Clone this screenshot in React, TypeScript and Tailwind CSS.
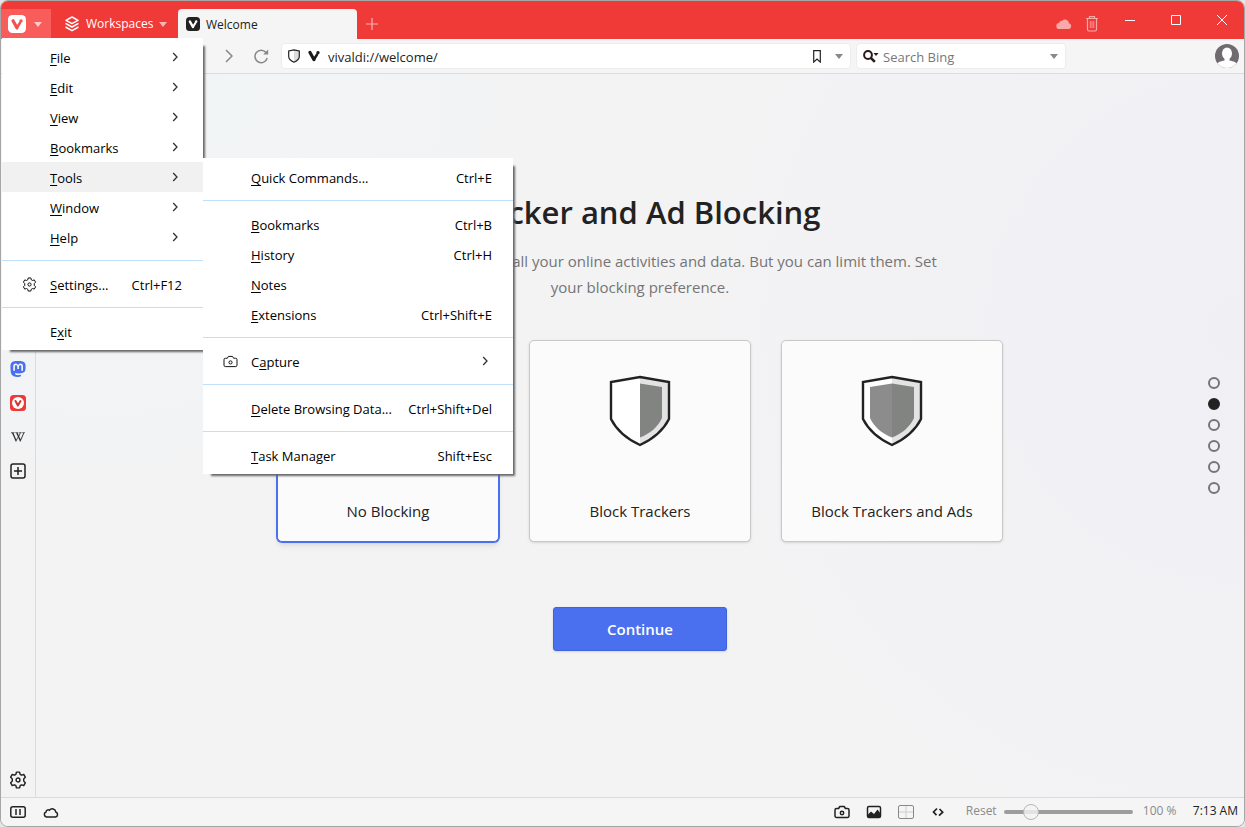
import { ReactNode } from "react";
import { SiMastodon } from "react-icons/si";
import { FaWikipediaW } from "react-icons/fa";

type Entry = {
  label: string;
  hot: number;
  shortcut?: string;
  submenu?: boolean;
  icon?: ReactNode;
  active?: boolean;
};

function Gear({ className }: { className: string }) {
  return (
    <svg viewBox="0 0 16 16" className={className} fill="none" stroke="currentColor" strokeLinejoin="round">
      <path d="M6.6 1h2.8l.5 2 1.2.7 2-.6 1.4 2.4-1.4 1.5v2l1.4 1.5-1.4 2.4-2-.6-1.2.7-.5 2H6.6l-.5-2-1.2-.7-2 .6-1.4-2.4L2.900 9V7L1.500 5.500l1.400-2.400 2 .600 1.200-.700z" />
      <circle cx="8" cy="8" r="1.700" />
    </svg>
  );
}

function Camera({ className }: { className: string }) {
  return (
    <svg viewBox="0 0 16 14" className={className} fill="none" stroke="currentColor" strokeLinejoin="round">
      <path d="M2.500 3.500H4.600L5.800 1.500h4.400l1.200 2h2.100a1.500 1.500 0 0 1 1.500 1.500v6a1.500 1.500 0 0 1-1.500 1.500h-11A1.500 1.500 0 0 1 1 11V5a1.500 1.500 0 0 1 1.500-1.500z" />
      <circle cx="8" cy="8" r="1.700" />
    </svg>
  );
}

function Caret({ className }: { className: string }) {
  return (
    <svg viewBox="0 0 8 5" className={`h-[5px] w-2 shrink-0 ${className}`} fill="currentColor">
      <path d="M0 0h8L4 5z" />
    </svg>
  );
}

function ChevronRight({ className }: { className: string }) {
  return (
    <svg viewBox="0 0 6 10" className={className} fill="none" stroke="currentColor" strokeWidth="1.300">
      <path d="M1.200 1L5 5 1.200 9" />
    </svg>
  );
}

function VShape() {
  return (
    <g fill="none" stroke="currentColor" strokeLinecap="round" strokeLinejoin="round">
      <path d="M2 2.500L5.900 9.500" strokeWidth="3.200" />
      <path d="M5.900 9.500L9 4.600" strokeWidth="2.600" />
      <circle cx="10" cy="2.600" r="1" strokeWidth="1.400" fill="currentColor" />
    </g>
  );
}

function VMark({ className }: { className: string }) {
  return (
    <svg viewBox="0 0 12 12" className={className}>
      <VShape />
    </svg>
  );
}

function VBadge({ className, tile }: { className: string; tile: string }) {
  return (
    <svg viewBox="0 0 18 18" className={className}>
      <rect width="18" height="18" rx="4.500" fill={tile} />
      <g transform="translate(3 3.300)">
        <VShape />
      </g>
    </svg>
  );
}

const toolsMenu: Entry[][] = [
  [{ label: "Quick Commands...", hot: 0, shortcut: "Ctrl+E" }],
  [
    { label: "Bookmarks", hot: 0, shortcut: "Ctrl+B" },
    { label: "History", hot: 0, shortcut: "Ctrl+H" },
    { label: "Notes", hot: 0 },
    { label: "Extensions", hot: 0, shortcut: "Ctrl+Shift+E" },
  ],
  [{ label: "Capture", hot: 1, submenu: true, icon: <Camera className="h-[13px] w-[15px]" /> }],
  [{ label: "Delete Browsing Data...", hot: 0, shortcut: "Ctrl+Shift+Del" }],
  [{ label: "Task Manager", hot: 0, shortcut: "Shift+Esc" }],
];

const mainMenu: Entry[][] = [
  [
    { label: "File", hot: 0, submenu: true },
    { label: "Edit", hot: 0, submenu: true },
    { label: "View", hot: 0, submenu: true },
    { label: "Bookmarks", hot: 0, submenu: true },
    { label: "Tools", hot: 0, submenu: true, active: true },
    { label: "Window", hot: 0, submenu: true },
    { label: "Help", hot: 0, submenu: true },
  ],
  [{ label: "Settings...", hot: 0, shortcut: "Ctrl+F12", icon: <Gear className="size-[15px]" /> }],
  [{ label: "Exit", hot: 1 }],
];

function Menu({ groups, className, name }: { groups: Entry[][]; className: string; name: string }) {
  return (
    <div
      role="menu"
      aria-label={name}
      className={`absolute bg-white py-1 text-black shadow-[5px_5px_2px_-3px_#666] ${className}`}
    >
      {groups.map((group, g) => (
        <div key={g} className={g > 0 ? "mt-2 border-t border-[#bfe0fa] pt-2" : ""}>
          {group.map((e) => (
            <button
              key={e.label}
              role="menuitem"
              className={`flex h-[30px] w-full items-center whitespace-nowrap text-[13px] font-medium ${e.active ? "bg-[#f1f1f1]" : ""}`}
            >
              <span className="w-12 shrink-0 pl-5">{e.icon}</span>
              <span className="pt-1">
                {e.label.slice(0, e.hot)}
                <span className="underline underline-offset-2">{e.label[e.hot]}</span>
                {e.label.slice(e.hot + 1)}
              </span>
              {e.shortcut && <span className="ml-auto pt-1 pr-[21px]">{e.shortcut}</span>}
              {e.submenu && <ChevronRight className="mr-[25px] ml-auto h-2.5 w-1.5 text-[#333]" />}
            </button>
          ))}
        </div>
      ))}
    </div>
  );
}

function TitleBar() {
  return (
    <header className="flex h-[38px] shrink-0 items-end bg-[#f03a38] text-white">
      <button aria-label="Vivaldi menu" className="flex h-[30px] w-[50px] items-center gap-2 bg-[#f85d5b] pl-[7px]">
        <VBadge className="size-[18px] text-[#f4504e]" tile="#fff" />
        <Caret className="text-[#fcc8c8]" />
      </button>
      <button className="flex h-[30px] w-[127px] items-center pl-3.5 text-xs font-medium">
        <svg viewBox="0 0 14 16" className="mr-[7px] h-4 w-3.5" fill="none" stroke="currentColor" strokeWidth="1.500" strokeLinejoin="round">
          <path d="M7 1l6 3.300-6 3.300-6-3.300z" />
          <path d="M.5 7.300L7 11l6.500-3.700M.5 11L7 14.700l6.500-3.700" />
        </svg>
        Workspaces
        <Caret className="mr-[11px] ml-auto text-[#fbb4b4]" />
      </button>
      <div className="flex h-[30px] w-[179px] items-center gap-1.5 rounded-t-sm bg-[#f5f5f5] pl-2 text-xs text-[#222]">
        <VBadge className="size-3.5 text-white" tile="#222" />
        <span className="pt-0.5">Welcome</span>
      </div>
      <button aria-label="New tab" className="grid size-[30px] place-items-center">
        <svg viewBox="0 0 12 12" className="size-3" stroke="#fbb4b4" strokeWidth="1.200">
          <path d="M6 0v12M0 6h12" />
        </svg>
      </button>
      <div className="mr-px ml-auto flex h-[30px] items-center text-[#f8a9a8]">
        <button aria-label="Sync" className="grid w-7 place-items-center">
          <svg viewBox="0 0 16 12" className="h-3 w-4" fill="currentColor">
            <path d="M3.500 11a3 3 0 0 1-.3-6 2.300 2.300 0 0 1 3-2.200A4 4 0 0 1 13 5.200 3 3 0 0 1 13 11z" />
          </svg>
        </button>
        <button aria-label="Closed tabs" className="grid w-7 place-items-center">
          <svg viewBox="0 0 14 16" className="h-4 w-3.5" fill="none" stroke="currentColor" strokeWidth="1.200">
            <path d="M1 2.500h12M4.500 2V.7h5V2M2.500 3v10.500a1.500 1.500 0 0 0 1.500 1.500h6a1.500 1.500 0 0 0 1.500-1.500V3" />
            <path d="M5.300 5v7M7 5v7M8.700 5v7" strokeWidth=".8" />
          </svg>
        </button>
      </div>
      <div className="-mr-px flex h-[38px] w-[138px] shrink-0 items-center">
        <button aria-label="Minimize" className="grid h-full flex-1 place-items-center">
          <svg viewBox="0 0 10 10" className="size-2.5" stroke="white"><path d="M0 5.500h10" /></svg>
        </button>
        <button aria-label="Maximize" className="grid h-full flex-1 place-items-center">
          <svg viewBox="0 0 10 10" className="size-2.5" fill="none" stroke="white"><path d="M.5.5h9v9h-9z" /></svg>
        </button>
        <button aria-label="Close" className="grid h-full flex-1 place-items-center">
          <svg viewBox="0 0 10 10" className="size-2.5" stroke="white"><path d="M0 0l10 10M10 0L0 10" /></svg>
        </button>
      </div>
    </header>
  );
}

function Toolbar() {
  return (
    <div className="flex h-[35px] shrink-0 items-center border-b border-[#dcdcdc] bg-[#f5f5f5] pr-[5px] pl-[212px]">
      <button aria-label="Forward" className="grid w-8 shrink-0 place-items-center text-[#888]">
        <svg viewBox="0 0 8 14" className="h-3.5 w-2" fill="none" stroke="currentColor" strokeWidth="1.500"><path d="M1 1l6 6-6 6" /></svg>
      </button>
      <button aria-label="Reload" className="grid w-8 shrink-0 place-items-center text-[#888]">
        <svg viewBox="0 0 16 16" className="size-4" fill="none" stroke="currentColor" strokeWidth="1.500">
          <path d="M13 4.500A6.200 6.200 0 1 0 14.200 10" />
          <path d="M15.200 1.500v5h-5z" fill="currentColor" stroke="none" />
        </svg>
      </button>
      <div className="ml-1 flex h-[26px] flex-1 items-center rounded border border-[#ececec] bg-white pl-1.5">
        <svg viewBox="0 0 12 14" className="h-3.5 w-3 shrink-0">
          <path d="M6 .8l5.300 1.200v5.500c0 3-2.800 4.700-5.300 5.800C3.500 12.200.7 10.500.7 7.500V2z" fill="white" />
          <path d="M6 .8l5.300 1.200v5.500c0 3-2.800 4.700-5.300 5.800z" fill="#ddd" />
          <path d="M6 .8l5.300 1.200v5.500c0 3-2.800 4.700-5.300 5.800C3.500 12.200.7 10.500.7 7.500V2z" fill="none" stroke="#222" strokeWidth="1.200" />
        </svg>
        <VMark className="ml-2 size-3 shrink-0 text-[#1a1a1a]" />
        <input
          aria-label="Address"
          defaultValue="vivaldi://welcome/"
          className="ml-2 h-6 min-w-0 flex-1 bg-transparent pt-0.5 text-[13px] text-[#222] outline-none"
        />
        <button aria-label="Bookmark page" className="shrink-0">
          <svg viewBox="0 0 8 13" className="h-[13px] w-2" fill="none" stroke="#222" strokeWidth="1.200">
            <path d="M.7.700h6.600v11.400L4 9 .7 12.100z" />
          </svg>
        </button>
        <Caret className="mr-[7px] ml-3.5 text-[#888]" />
      </div>
      <div className="ml-[5px] flex h-[26px] w-[210px] shrink-0 items-center rounded border border-[#ececec] bg-white pl-1.5">
        <svg viewBox="0 0 16 13" className="h-[13px] w-4 shrink-0" fill="none" stroke="#2a1a1a" strokeWidth="2">
          <circle cx="5" cy="5" r="3.900" />
          <path d="M7.800 7.800l4 4" strokeWidth="2.600" />
          <path d="M10.500 3h5L13 6z" fill="#2a1a1a" stroke="none" />
        </svg>
        <input
          aria-label="Search"
          placeholder="Search Bing"
          className="ml-1 h-6 min-w-0 flex-1 bg-transparent pt-0.5 text-[13px] outline-none placeholder:text-[#777]"
        />
        <Caret className="mr-[7px] text-[#888]" />
      </div>
      <button aria-label="Profile" className="ml-[149px] shrink-0">
        <svg viewBox="0 0 24 24" className="size-6">
          <defs><clipPath id="face"><circle cx="12" cy="12" r="12" /></clipPath></defs>
          <g clipPath="url(#face)">
            <path d="M0 0h24v24H0z" fill="#6f6b6e" />
            <ellipse cx="12" cy="9.500" rx="5" ry="6" fill="white" />
            <path d="M9.500 14h5v2.500c4 .8 7.500 2 8.500 4.500v3H1v-3c1-2.500 4.500-3.700 8.500-4.500z" fill="white" />
          </g>
        </svg>
      </button>
    </div>
  );
}

function SidePanel() {
  return (
    <nav aria-label="Panels" className="flex w-[35px] shrink-0 flex-col items-center border-r border-[#dadcdd] pt-[278px] pb-2 text-[#222]">
      <button aria-label="Mastodon" className="grid h-[34px] place-items-center text-[#4a6ff0]"><SiMastodon className="size-4" /></button>
      <button aria-label="Vivaldi" className="grid h-[34px] place-items-center">
        <svg viewBox="0 0 16 16" className="size-4">
          <rect width="16" height="16" rx="3.500" fill="#ef3939" />
          <circle cx="8" cy="8" r="6" fill="white" />
          <path d="M5.500 6l2.400 4.500L10.500 6" fill="none" stroke="#d8342f" strokeWidth="2" strokeLinecap="round" strokeLinejoin="round" />
        </svg>
      </button>
      <button aria-label="Wikipedia" className="grid h-[34px] place-items-center">
        <FaWikipediaW className="size-3.5 stroke-current stroke-[8]" />
      </button>
      <button aria-label="Add panel" className="grid h-[34px] place-items-center">
        <svg viewBox="0 0 16 16" className="size-4" fill="none" stroke="currentColor" strokeWidth="1.500">
          <rect x="1" y="1" width="14" height="14" rx="2" />
          <path d="M8 4v8M4 8h8" />
        </svg>
      </button>
      <button aria-label="Settings" className="mt-auto"><Gear className="size-[18px] stroke-[1.300]" /></button>
    </nav>
  );
}

function Shield({ level }: { level: 0 | 1 | 2 }) {
  return (
    <svg viewBox="0 0 62 72" className="h-[72px] w-[62px]">
      <path d="M31 2L60 7v37C54 56 44 64 31 70C18 64 8 56 2 44V7z" fill="white" />
      <path d="M31 2L60 7v37C54 56 44 64 31 70z" fill="#e3e3e3" />
      {level > 1 && <path d="M31 8.500L9 12v31c4 9 12 15.500 22 19.500z" fill="#8c8c8c" />}
      {level > 0 && <path d="M31 8.500L53 12v31c-4 9-12 15.500-22 19.500z" fill="#828482" />}
      <path d="M31 2L60 7v37C54 56 44 64 31 70C18 64 8 56 2 44V7z" fill="none" stroke="#222" strokeWidth="2.400" />
    </svg>
  );
}

const choices: { label: string; level: 0 | 1 | 2; selected?: boolean }[] = [
  { label: "No Blocking", level: 0, selected: true },
  { label: "Block Trackers", level: 1 },
  { label: "Block Trackers and Ads", level: 2 },
];

function Welcome() {
  return (
    <main className="flex flex-1 flex-col items-center pt-[113px] pb-10 text-[#222]">
      <h1 className="text-[31px] leading-[50px] font-semibold">Tracker and Ad Blocking</h1>
      <p className="mt-[11px] max-w-[640px] text-center text-[15px] leading-[26px] text-[#757575]">
        Trackers keep watch on all your online activities and data. But you can limit them. Set
        <br />
        your blocking preference.
      </p>
      <div className="mt-10 flex gap-[30px]">
        {choices.map((c) => (
          <button
            key={c.label}
            className={`flex h-[202px] w-[222px] flex-col items-center justify-between rounded-[5px] border bg-[#fbfbfb] pt-[34px] pb-[19px] text-[15px] ${
              c.selected ? "border-[#4a70ef] shadow-md ring-1 ring-[#4a70ef]" : "border-[#c8c8c8] shadow-sm"
            }`}
          >
            <Shield level={c.level} />
            {c.label}
          </button>
        ))}
      </div>
      <button className="mt-[65px] h-11 w-[174px] rounded-[3px] border border-[#3f63da] bg-[#4a70ef] text-[15px] font-semibold text-white shadow-sm">
        Continue
      </button>
    </main>
  );
}

function StatusBar() {
  return (
    <footer className="flex h-[29px] shrink-0 items-center border-t border-[#dadada] bg-[#f5f5f5] pr-1.5 pl-[9px] text-xs text-[#222]">
      <button aria-label="Break mode">
        <svg viewBox="0 0 16 12" className="h-3 w-4" fill="none" stroke="currentColor" strokeWidth="1.500">
          <rect x=".8" y=".8" width="14.400" height="10.400" rx="2" />
          <path d="M6 3v6M10 3v6" />
        </svg>
      </button>
      <button aria-label="Sync status" className="ml-[17px]">
        <svg viewBox="0 0 16 11" className="h-[11px] w-4" fill="none" stroke="currentColor" strokeWidth="1.500">
          <path d="M3.500 10a2.600 2.600 0 0 1-.5-5 2.200 2.200 0 0 1 3.400-1.800A3.600 3.600 0 0 1 12.800 5 2.600 2.600 0 0 1 12.500 10z" />
        </svg>
      </button>
      <div className="ml-auto flex items-center gap-4">
        <button aria-label="Capture page"><Camera className="h-3.5 w-4 stroke-[1.500]" /></button>
        <button aria-label="Show images">
          <svg viewBox="0 0 16 14" className="h-3.5 w-4" fill="none" stroke="currentColor" strokeWidth="1.500">
            <rect x="1.500" y="1.500" width="13" height="11" rx="1.500" />
            <path d="M2 12V9.500l3-3 3 2.500 3.500-4.500 3 4V12z" fill="currentColor" stroke="none" />
          </svg>
        </button>
        <button aria-label="Page tiling">
          <svg viewBox="0 0 16 14" className="h-3.5 w-4" fill="none" stroke="#888">
            <rect x=".5" y=".5" width="15" height="13" rx="1.500" />
            <path d="M8 1v12M1 7h14" stroke="#ccc" />
          </svg>
        </button>
        <button aria-label="Page actions">
          <svg viewBox="0 0 16 14" className="h-3.5 w-4" fill="none" stroke="currentColor" strokeWidth="1.700">
            <path d="M7 3.500L3.500 7l3 3.200M9.500 4l3.200 3.200L9 10.700" />
          </svg>
        </button>
      </div>
      <button className="ml-5 w-[38px] pb-0.5 text-left text-[#8a8a8a]">Reset</button>
      <input
        type="range"
        aria-label="Page zoom"
        min={0}
        max={100}
        defaultValue={17}
        className="h-1 w-[129px] appearance-none rounded-full bg-[#9d9d9d] [&::-webkit-slider-thumb]:size-4 [&::-webkit-slider-thumb]:appearance-none [&::-webkit-slider-thumb]:rounded-full [&::-webkit-slider-thumb]:border [&::-webkit-slider-thumb]:border-[#b5b5b5] [&::-webkit-slider-thumb]:bg-[#f5f5f5]/80"
      />
      <span className="ml-2.5 w-[50px] pb-0.5 text-[#8a8a8a]">100 %</span>
      <time className="pb-0.5 whitespace-nowrap">7:13 AM</time>
    </footer>
  );
}

export default function App() {
  return (
    <div className="min-h-screen bg-[#e6e6e6] font-['Open_Sans',sans-serif]">
      <div className="relative flex min-h-screen flex-col overflow-hidden rounded-lg border border-[#a6a6a6]">
        <TitleBar />
        <Toolbar />
        <div className="flex flex-1 bg-[#f3f3f4] bg-[radial-gradient(circle_at_8%_0%,#f1f5f6_0%,transparent_30%),radial-gradient(circle_at_100%_35%,#f0eff4_0%,transparent_40%)]">
          <SidePanel />
          <Welcome />
          <div className="-ml-9 flex w-9 flex-col items-center justify-center gap-[9px] pr-6">
            {[0, 1, 2, 3, 4, 5].map((n) => (
              <button
                key={n}
                aria-label={`Step ${n + 1}`}
                className={`size-3 shrink-0 rounded-full border-2 ${n === 1 ? "border-[#222] bg-[#222]" : "border-[#757575]"}`}
              />
            ))}
          </div>
        </div>
        <StatusBar />
        <Menu name="Vivaldi" groups={mainMenu} className="top-[37px] left-px w-[201px]" />
        <Menu name="Tools" groups={toolsMenu} className="top-[157px] left-[202px] w-[310px]" />
      </div>
    </div>
  );
}
